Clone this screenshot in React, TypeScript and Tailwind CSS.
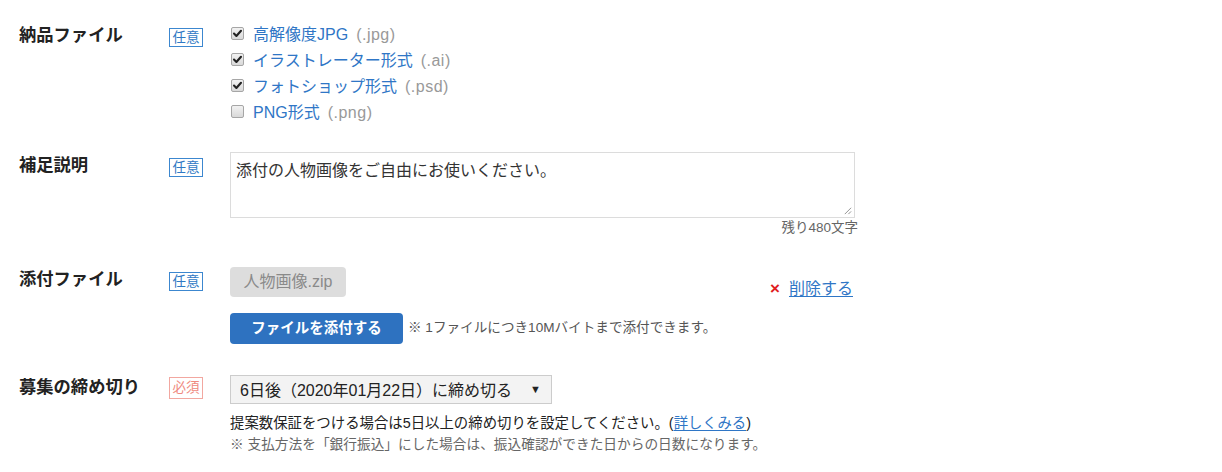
import React from "react";

const font = { fontFamily: '"Liberation Sans", "Noto Sans CJK JP", sans-serif' };

function Badge({ req }: { req?: boolean }) {
  return req ? (
    <span className="inline-flex h-[22px] w-[34px] items-center justify-center border border-[#f2a7a0] text-[13.5px] leading-none text-[#ef8a80]">
      必須
    </span>
  ) : (
    <span className="inline-flex h-[19px] w-[34px] items-center justify-center border border-[#3c87cf] text-[13.5px] leading-none text-[#2f79c4]">
      任意
    </span>
  );
}

function Check({ checked }: { checked: boolean }) {
  return (
    <span className="relative inline-block h-[13px] w-[13px] rounded-[2px] border border-[#a6a6a6] bg-gradient-to-b from-[#f2f2f2] to-[#d9d9d9]">
      {checked && (
        <svg viewBox="0 0 13 13" className="absolute left-[-1px] top-[-1px] h-[13px] w-[13px]">
          <path d="M3 6.6 L5.4 9 L10 3.8" fill="none" stroke="#222" strokeWidth="2.1" strokeLinecap="round" strokeLinejoin="round" />
        </svg>
      )}
    </span>
  );
}

function Label({ children }: { children: React.ReactNode }) {
  return <div className="w-[150px] shrink-0 text-[17.3px] font-bold leading-[26px] text-[#222]">{children}</div>;
}

export default function App() {
  const items: [string, string, boolean][] = [
    ["高解像度JPG", "(.jpg)", true],
    ["イラストレーター形式", "(.ai)", true],
    ["フォトショップ形式", "(.psd)", true],
    ["PNG形式", "(.png)", false],
  ];
  return (
    <div className="h-[472px] w-[1222px] bg-white pl-[19px] pt-[22px] text-[#222]" style={font}>
      {/* Row 1 */}
      <div className="flex items-start">
        <Label>納品ファイル</Label>
        <div className="w-[61px] shrink-0 pt-[3px]">
          <Badge />
        </div>
        <div className="flex flex-col">
          {items.map(([t, ext, c]) => (
            <div key={t} className="flex h-[26px] items-center">
              <span className="ml-[1px] mr-[9px] flex -translate-y-[2px]">
                <Check checked={c} />
              </span>
              <span className="text-[16px] text-[#2f76c6]">{t}</span>
              <span className="ml-[8px] text-[16px] tracking-[0.5px] text-[#999]">{ext}</span>
            </div>
          ))}
        </div>
      </div>

      {/* Row 2 */}
      <div className="mt-[26px] flex items-start">
        <Label>補足説明</Label>
        <div className="w-[61px] shrink-0 pt-[3px]">
          <Badge />
        </div>
        <div className="flex w-[628px] flex-col items-end">
          <div className="relative h-[66px] w-[625px] self-start border border-[#dcdcdc] bg-white px-[5px] pt-[6px] text-[16px] leading-[24px] text-[#333]">
            添付の人物画像をご自由にお使いください。
            <svg viewBox="0 0 10 10" className="absolute bottom-[2px] right-[2px] h-[9px] w-[9px]">
              <path d="M9 2 L2 9 M9 6 L6 9" stroke="#888" strokeWidth="1" />
            </svg>
          </div>
          <div className="mt-[1px] text-[13.5px] leading-[18px] text-[#666]">残り480文字</div>
        </div>
      </div>

      {/* Row 3 */}
      <div className="mt-[29px] flex items-start">
        <Label>添付ファイル</Label>
        <div className="w-[61px] shrink-0 pt-[3px]">
          <Badge />
        </div>
        <div className="flex w-[623px] flex-col">
          <div className="flex items-start justify-between">
            <div className="mt-[1px] flex h-[30px] w-[116px] items-center justify-center rounded-[4px] bg-[#dddddd] text-[16px] text-[#8a8a8a]">
              人物画像.zip
            </div>
            <div className="mt-[12px] flex items-center text-[16px] leading-[22px]">
              <span className="mr-[9px] text-[17px] font-bold text-[#e02020]">×</span>
              <span className="text-[#2f76c6] underline underline-offset-2">削除する</span>
            </div>
          </div>
          <div className="mt-[13px] flex items-center">
            <div className="flex h-[31px] w-[173px] items-center justify-center rounded-[4px] bg-[#2e72c0] text-[14.5px] font-bold text-white">
              ファイルを添付する
            </div>
            <span className="ml-[5px] text-[13.6px] text-[#555]">※ 1ファイルにつき10Mバイトまで添付できます。</span>
          </div>
        </div>
      </div>

      {/* Row 4 */}
      <div className="mt-[30px] flex items-start">
        <Label>募集の締め切り</Label>
        <div className="w-[61px] shrink-0 pt-[1px]">
          <Badge req />
        </div>
        <div className="flex flex-col">
          <div className="mt-[1px] flex h-[29px] w-[322px] items-center justify-between border border-[#cccccc] bg-[#f3f3f3] pl-[9px] pr-[10px] text-[16px] text-[#222]">
            <span className="pt-[2px]">6日後（2020年01月22日）に締め切る</span>
            <span className="text-[11px] leading-none">▼</span>
          </div>
          <div className="mt-[9px] text-[14.4px] leading-[20px] text-[#222]">
            提案数保証をつける場合は5日以上の締め切りを設定してください。(
            <span className="text-[#2f76c6] underline underline-offset-2">詳しくみる</span>)
          </div>
          <div className="mt-[2px] text-[13.7px] leading-[20px] text-[#666]">
            ※ 支払方法を「銀行振込」にした場合は、振込確認ができた日からの日数になります。
          </div>
        </div>
      </div>
    </div>
  );
}
